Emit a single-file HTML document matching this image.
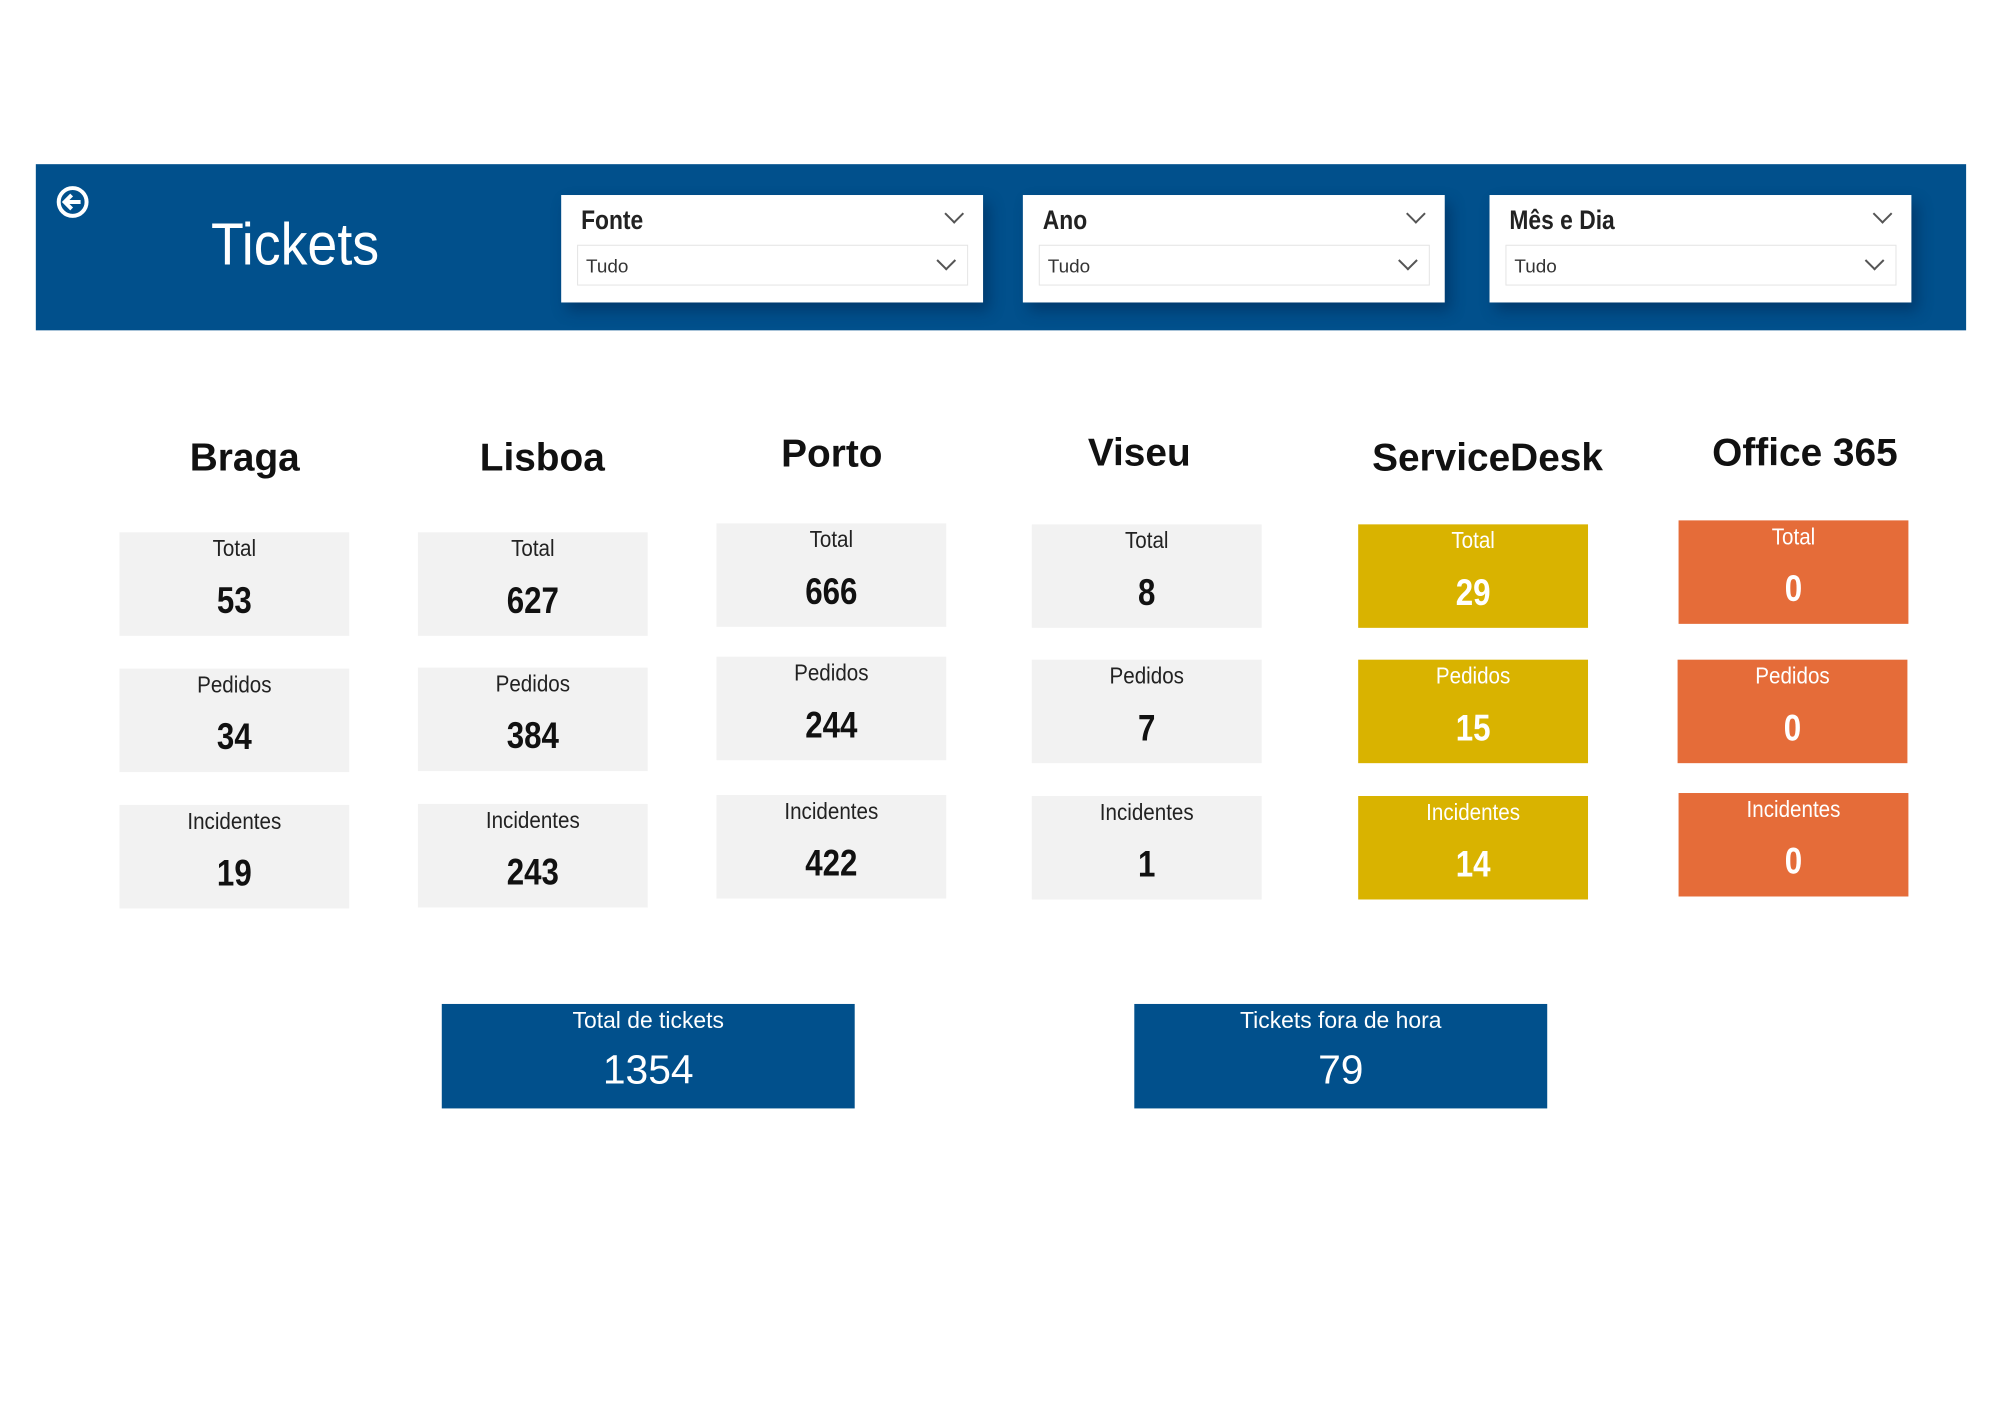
<!DOCTYPE html>
<html><head><meta charset="utf-8"><style>
*{margin:0;padding:0;box-sizing:border-box}
body{width:2000px;height:1414px;background:#fff;position:relative;overflow:hidden;font-family:"Liberation Sans",sans-serif}
#w{position:absolute;left:0;top:0;width:2000px;height:1414px;transform:scale(0.995);transform-origin:0 0}
.a{position:absolute}
.hdr{left:36px;top:165px;width:1940px;height:167px;background:#01508C}
.title{left:212px;top:210px;color:#fff;font-size:60px;line-height:72px;transform:scaleX(0.9);transform-origin:left}
.sl{background:#fff;box-shadow:6px 8px 14px rgba(0,30,70,.45);width:424px;height:108px;top:196px}
.sl .t{position:absolute;left:20px;top:10px;font-size:27px;font-weight:bold;color:#222;transform:scaleX(.85);transform-origin:left}
.sl .dd{position:absolute;left:16px;top:50px;width:393px;height:41px;border:1px solid #e4e4e4}
.sl .dd span{position:absolute;left:8px;top:11px;font-size:19px;color:#333}
.chev{position:absolute;width:14px;height:14px;border-right:2px solid #555;border-bottom:2px solid #555;transform:rotate(45deg)}
.city{font-weight:bold;font-size:39px;color:#111;width:400px;text-align:center;line-height:48px}
.c{width:231px;height:104px;text-align:center;background:#f2f2f2;color:#222}
.c .l{position:absolute;left:0;right:0;top:2px;font-size:23px;line-height:28px;transform:scaleX(.9)}
.c .v{position:absolute;left:0;right:0;top:47px;font-size:37px;font-weight:bold;line-height:44px;color:#111;transform:scaleX(.85)}
.y{background:#D9B300}.o{background:#E56C39}
.y .l,.y .v,.o .l,.o .v{color:#fff}
.b{background:#01508C;width:415px;height:105px;color:#fff;text-align:center}
.b .l{position:absolute;left:0;right:0;top:2px;font-size:23px;line-height:28px}
.b .v{position:absolute;left:0;right:0;top:42px;font-size:41px;line-height:48px}
</style></head><body><div id="w">
<div class="a hdr"></div>
<svg class="a" style="left:56px;top:186px" width="34" height="34" viewBox="0 0 34 34"><circle cx="17" cy="17" r="14" fill="none" stroke="#fff" stroke-width="4"/><path d="M25 17H10M16 10l-7 7 7 7" fill="none" stroke="#fff" stroke-width="4"/></svg>
<div class="a title">Tickets</div>

<div class="a sl" style="left:564px"><div class="t">Fonte</div><div class="chev" style="right:22px;top:12px"></div><div class="dd"><span>Tudo</span><div class="chev" style="right:14px;top:8px"></div></div></div>
<div class="a sl" style="left:1028px"><div class="t">Ano</div><div class="chev" style="right:22px;top:12px"></div><div class="dd"><span>Tudo</span><div class="chev" style="right:14px;top:8px"></div></div></div>
<div class="a sl" style="left:1497px"><div class="t">Mês e Dia</div><div class="chev" style="right:22px;top:12px"></div><div class="dd"><span>Tudo</span><div class="chev" style="right:14px;top:8px"></div></div></div>

<div class="a city" style="left:46px;top:437px">Braga</div>
<div class="a city" style="left:345px;top:437px">Lisboa</div>
<div class="a city" style="left:636px;top:433px">Porto</div>
<div class="a city" style="left:945px;top:432px">Viseu</div>
<div class="a city" style="left:1295px;top:437px">ServiceDesk</div>
<div class="a city" style="left:1614px;top:432px">Office 365</div>

<div class="a c" style="left:120px;top:535px"><div class="l">Total</div><div class="v">53</div></div>
<div class="a c" style="left:120px;top:672px"><div class="l">Pedidos</div><div class="v">34</div></div>
<div class="a c" style="left:120px;top:809px"><div class="l">Incidentes</div><div class="v">19</div></div>

<div class="a c" style="left:420px;top:535px"><div class="l">Total</div><div class="v">627</div></div>
<div class="a c" style="left:420px;top:671px"><div class="l">Pedidos</div><div class="v">384</div></div>
<div class="a c" style="left:420px;top:808px"><div class="l">Incidentes</div><div class="v">243</div></div>

<div class="a c" style="left:720px;top:526px"><div class="l">Total</div><div class="v">666</div></div>
<div class="a c" style="left:720px;top:660px"><div class="l">Pedidos</div><div class="v">244</div></div>
<div class="a c" style="left:720px;top:799px"><div class="l">Incidentes</div><div class="v">422</div></div>

<div class="a c" style="left:1037px;top:527px"><div class="l">Total</div><div class="v">8</div></div>
<div class="a c" style="left:1037px;top:663px"><div class="l">Pedidos</div><div class="v">7</div></div>
<div class="a c" style="left:1037px;top:800px"><div class="l">Incidentes</div><div class="v">1</div></div>

<div class="a c y" style="left:1365px;top:527px"><div class="l">Total</div><div class="v">29</div></div>
<div class="a c y" style="left:1365px;top:663px"><div class="l">Pedidos</div><div class="v">15</div></div>
<div class="a c y" style="left:1365px;top:800px"><div class="l">Incidentes</div><div class="v">14</div></div>

<div class="a c o" style="left:1687px;top:523px"><div class="l">Total</div><div class="v">0</div></div>
<div class="a c o" style="left:1686px;top:663px"><div class="l">Pedidos</div><div class="v">0</div></div>
<div class="a c o" style="left:1687px;top:797px"><div class="l">Incidentes</div><div class="v">0</div></div>

<div class="a b" style="left:444px;top:1009px"><div class="l">Total de tickets</div><div class="v">1354</div></div>
<div class="a b" style="left:1140px;top:1009px"><div class="l">Tickets fora de hora</div><div class="v">79</div></div>
</div></body></html>
